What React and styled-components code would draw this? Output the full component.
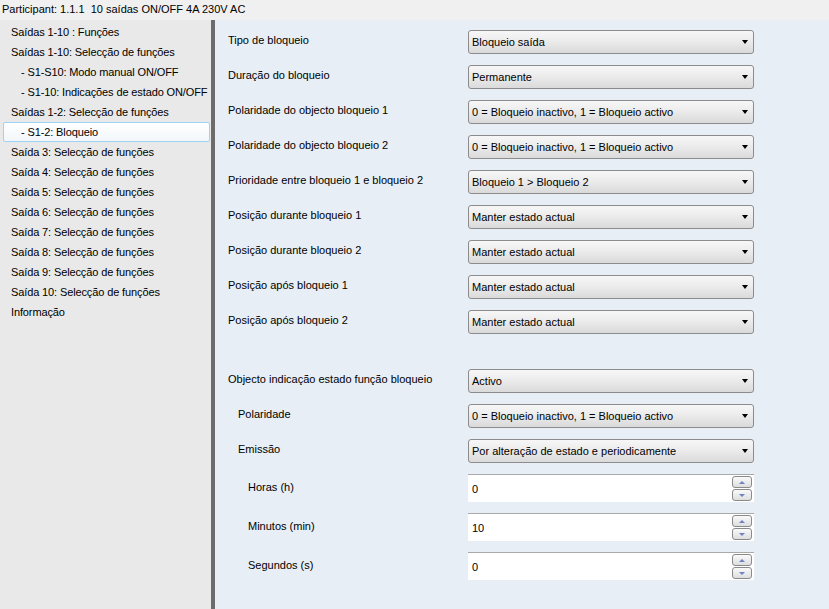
import styled, { createGlobalStyle } from 'styled-components'

const Global = createGlobalStyle`
  html, body { margin: 0; padding: 0; }
  body {
    font-family: "Liberation Sans", Arial, sans-serif;
    font-size: 11px;
    color: #000;
  }
`

const Window = styled.div`
  width: 829px;
  height: 609px;
  display: flex;
  flex-direction: column;
  overflow: hidden;
`

const TitleBar = styled.div`
  height: 20px;
  line-height: 19px;
  padding-left: 2px;
  background: #f0f0f0;
  white-space: pre;
`

const Body = styled.div`
  flex: 1;
  display: flex;
`

const Sidebar = styled.div`
  width: 211px;
  background: #e9e9e9;
  padding-top: 2px;
  display: flex;
  flex-direction: column;
`

const NavItem = styled.div`
  height: 20px;
  margin: 0 1px 0 3px;
  padding-left: ${p => (p.sub ? 17 : 7)}px;
  white-space: nowrap;
  letter-spacing: -0.12px;
  box-sizing: border-box;
  border: 1px solid ${p => (p.active ? '#9fd3f3' : 'transparent')};
  border-radius: 2px;
  line-height: 18px;
  background: ${p => (p.active ? 'linear-gradient(#ffffff, #f2f6fa)' : 'transparent')};
`

const Divider = styled.div`
  width: 4px;
  background: #6c6c6c;
`

const Content = styled.div`
  flex: 1;
  background: #e7eef5;
  padding: 5px 0 0 13px;
`

const Row = styled.div`
  height: ${p => (p.tall ? 39 : 35)}px;
  display: flex;
  align-items: flex-start;
`

const Spacer = styled.div`
  height: 24px;
`

const Label = styled.div`
  width: 240px;
  padding-left: ${p => p.indent * 10}px;
  box-sizing: border-box;
  line-height: 14px;
  margin-top: ${p => p.top}px;
`

const Select = styled.div`
  width: 286px;
  height: 24px;
  margin-top: 5px;
  box-sizing: border-box;
  border: 1px solid #8c8c8c;
  border-radius: 3px;
  background: linear-gradient(#f7f7f7 0%, #ececec 45%, #dadada 100%);
  display: flex;
  align-items: center;
  padding: 0 0 0 3px;
`

const SelectText = styled.span`
  flex: 1;
`

const Arrow = styled.span`
  width: 0;
  height: 0;
  border-left: 3.5px solid transparent;
  border-right: 3.5px solid transparent;
  border-top: 4px solid #000;
  margin-right: 5px;
`

const Spin = styled.div`
  width: 286px;
  height: 28px;
  margin-top: 5px;
  box-sizing: border-box;
  background: #fff;
  border-top: 1px solid #a9a9a9;
  display: flex;
  align-items: center;
  padding-left: 4px;
`

const SpinValue = styled.span`
  flex: 1;
`

const SpinButtons = styled.div`
  display: flex;
  flex-direction: column;
  gap: 1px;
  margin-right: 2px;
`

const SpinButton = styled.div`
  width: 20px;
  height: 12px;
  box-sizing: border-box;
  border: 1px solid #8a8a8a;
  border-radius: 3px;
  background: linear-gradient(#fafafa, #dedede);
  display: flex;
  align-items: center;
  justify-content: center;
`

const Tri = styled.span`
  width: 0;
  height: 0;
  border-left: 3px solid transparent;
  border-right: 3px solid transparent;
  ${p => (p.up ? 'border-bottom: 3px solid #6f83c4;' : 'border-top: 3px solid #6f83c4;')}
`

const nav = [
  { t: 'Saídas 1-10 : Funções' },
  { t: 'Saídas 1-10: Selecção de funções' },
  { t: '- S1-S10: Modo manual ON/OFF', sub: true },
  { t: '- S1-10: Indicações de estado ON/OFF', sub: true },
  { t: 'Saídas 1-2: Selecção de funções' },
  { t: '- S1-2: Bloqueio', sub: true, active: true },
  { t: 'Saída 3: Selecção de funções' },
  { t: 'Saída 4: Selecção de funções' },
  { t: 'Saída 5: Selecção de funções' },
  { t: 'Saída 6: Selecção de funções' },
  { t: 'Saída 7: Selecção de funções' },
  { t: 'Saída 8: Selecção de funções' },
  { t: 'Saída 9: Selecção de funções' },
  { t: 'Saída 10: Selecção de funções' },
  { t: 'Informação' },
]

const POL = '0 = Bloqueio inactivo, 1 = Bloqueio activo'
const KEEP = 'Manter estado actual'

const params = [
  ['Tipo de bloqueio', 'Bloqueio saída'],
  ['Duração do bloqueio', 'Permanente'],
  ['Polaridade do objecto bloqueio 1', POL],
  ['Polaridade do objecto bloqueio 2', POL],
  ['Prioridade entre bloqueio 1 e bloqueio 2', 'Bloqueio 1 > Bloqueio 2'],
  ['Posição durante bloqueio 1', KEEP],
  ['Posição durante bloqueio 2', KEEP],
  ['Posição após bloqueio 1', KEEP],
  ['Posição após bloqueio 2', KEEP],
]

const params2 = [
  ['Objecto indicação estado função bloqueio', 'Activo', 0],
  ['Polaridade', POL, 1],
  ['Emissão', 'Por alteração de estado e periodicamente', 1],
]

const spins = [
  ['Horas (h)', '0'],
  ['Minutos (min)', '10'],
  ['Segundos (s)', '0'],
]

const SelectRow = ({ label, value, indent = 0 }) => (
  <Row>
    <Label indent={indent} top={8}>{label}</Label>
    <Select>
      <SelectText>{value}</SelectText>
      <Arrow />
    </Select>
  </Row>
)

export default function App() {
  return (
    <Window>
      <Global />
      <TitleBar>Participant: 1.1.1  10 saídas ON/OFF 4A 230V AC</TitleBar>
      <Body>
        <Sidebar>
          {nav.map(n => (
            <NavItem key={n.t} sub={n.sub} active={n.active}>{n.t}</NavItem>
          ))}
        </Sidebar>
        <Divider />
        <Content>
          {params.map(([l, v]) => <SelectRow key={l} label={l} value={v} />)}
          <Spacer />
          {params2.map(([l, v, i]) => <SelectRow key={l} label={l} value={v} indent={i} />)}
          {spins.map(([l, v]) => (
            <Row tall key={l}>
              <Label indent={2} top={11}>{l}</Label>
              <Spin>
                <SpinValue>{v}</SpinValue>
                <SpinButtons>
                  <SpinButton><Tri up /></SpinButton>
                  <SpinButton><Tri /></SpinButton>
                </SpinButtons>
              </Spin>
            </Row>
          ))}
        </Content>
      </Body>
    </Window>
  )
}
